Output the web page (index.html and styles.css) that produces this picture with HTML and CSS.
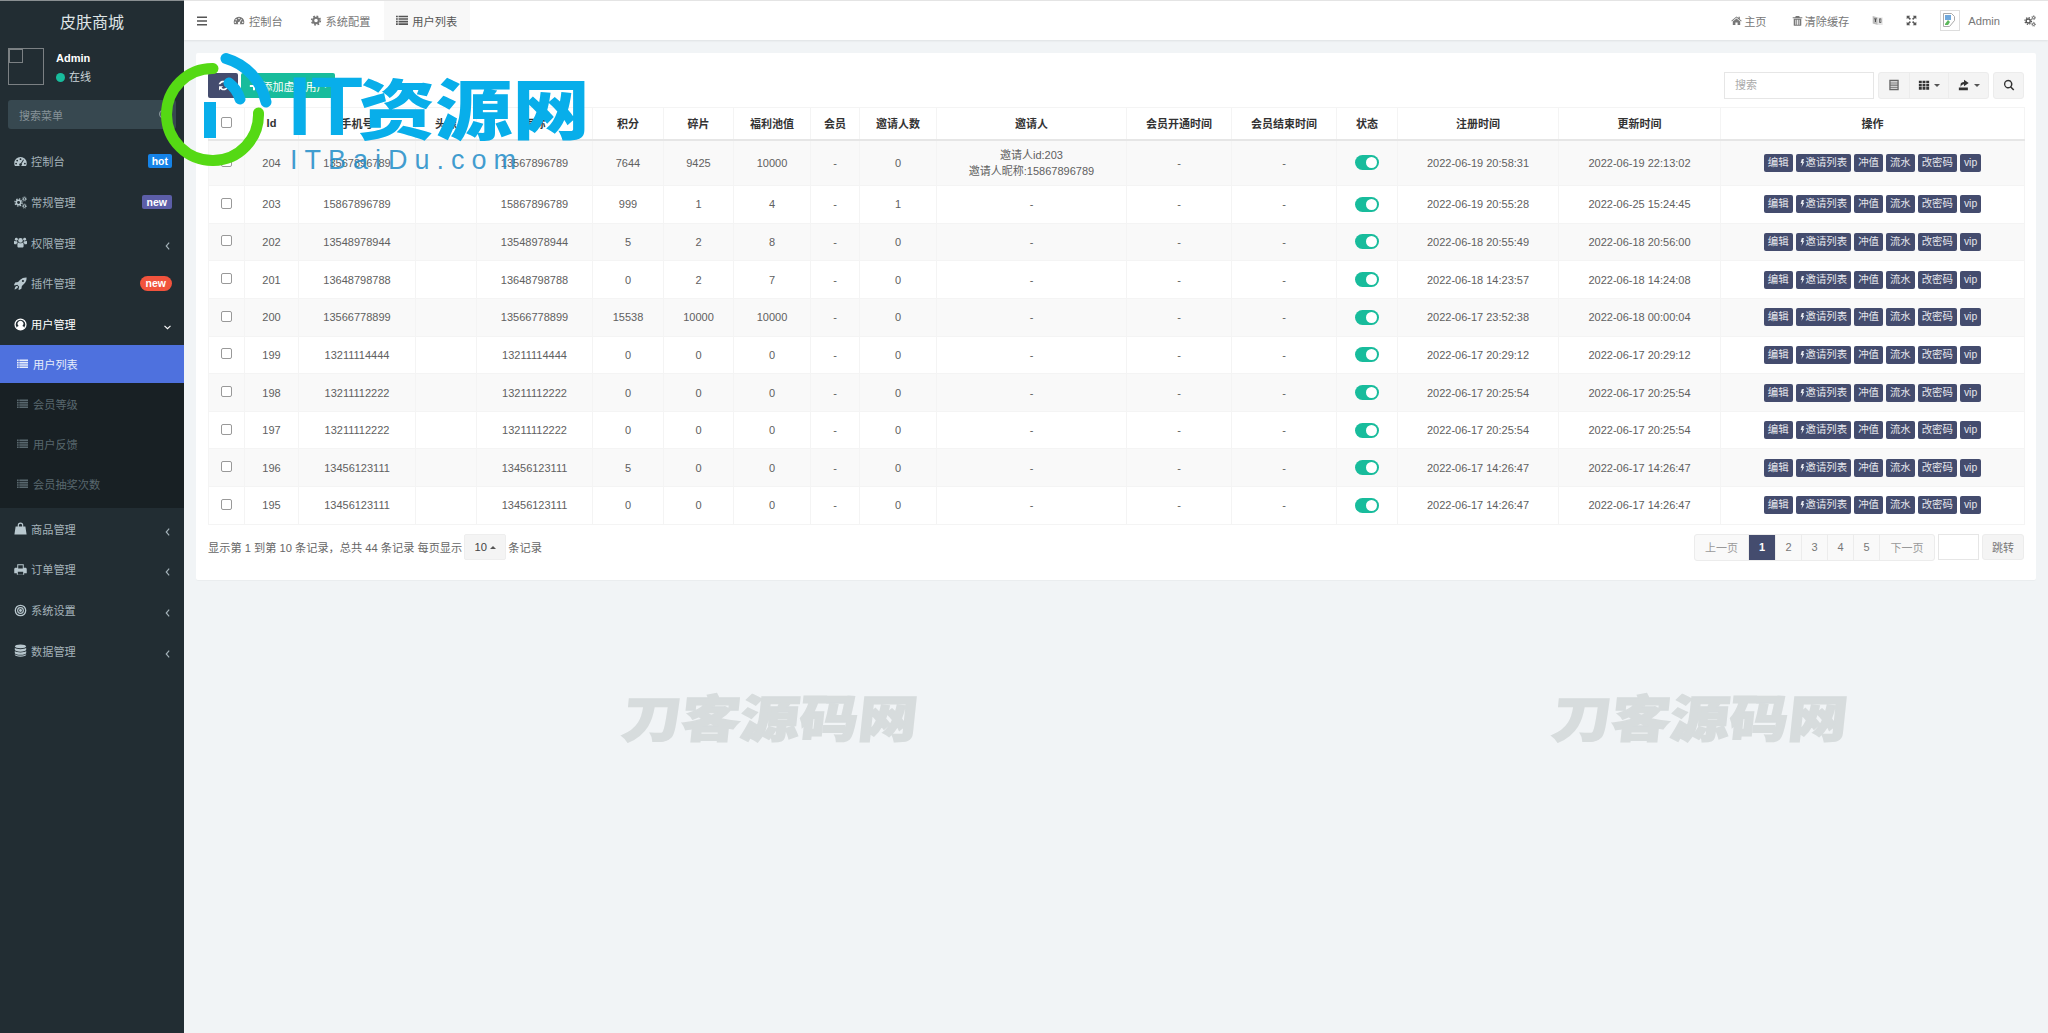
FILE: index.html
```html
<!DOCTYPE html>
<html lang="zh-CN">
<head>
<meta charset="utf-8">
<title>皮肤商城</title>
<link rel="stylesheet" href="styles.css">
</head>
<body>
<svg class="defs" width="0" height="0" aria-hidden="true">
  <symbol id="i-dash" viewBox="0 0 16 16"><path fill-rule="evenodd" d="M8 2.5A7.7 7.7 0 0 0 .3 10.2c0 1.3.3 2.4.9 3.3h13.6c.6-.9.9-2 .9-3.3A7.7 7.7 0 0 0 8 2.5zM8 4a1.1 1.1 0 1 1 0 2.2A1.1 1.1 0 0 1 8 4zM3.9 5.8a1.1 1.1 0 1 1 0 2.2 1.1 1.1 0 0 1 0-2.2zM2.600 9.500a1.100 1.100 0 1 1 0 2.200 1.100 1.100 0 0 1 0-2.200zM13.400 9.500a1.100 1.100 0 1 1 0 2.200 1.100 1.100 0 0 1 0-2.200zM11.300 5.500l.9.600-2.800 4.600a1.700 1.700 0 1 1-1-.600z"/></symbol>
  <symbol id="i-cogs" viewBox="0 0 16 16"><g fill="none" stroke="currentColor"><circle cx="5.600" cy="8" r="2.700" stroke-width="1.800"/><circle cx="5.600" cy="8" r="4.400" stroke-width="1.600" stroke-dasharray="1.800 1.650"/><circle cx="12.800" cy="3.600" r="1.500" stroke-width="1.200"/><circle cx="12.800" cy="3.600" r="2.600" stroke-width="1" stroke-dasharray="1 1.040"/><circle cx="12.800" cy="12.400" r="1.500" stroke-width="1.200"/><circle cx="12.800" cy="12.400" r="2.600" stroke-width="1" stroke-dasharray="1 1.040"/></g></symbol>
  <symbol id="i-users" viewBox="0 0 16 16"><circle cx="8" cy="5.400" r="2.800"/><circle cx="2.900" cy="4" r="1.800"/><circle cx="13.100" cy="4" r="1.800"/><path d="M4.200 9.700c0-1 .9-1.500 1.700-1.500.6.500 1.300.8 2.100.8s1.500-.3 2.100-.8c.8 0 1.700.5 1.700 1.500v2.800c0 1-.7 1.500-1.500 1.500H5.700c-.8 0-1.500-.5-1.500-1.500zM0 6.800c0-.5.5-.9 1-.9.500.5 1.200.7 1.900.7.300 0 .6 0 .9-.1.200.6.500 1.100.9 1.500-.8.300-1.500 1-1.600 2H.9c-.5 0-.9-.3-.9-.8zM16 6.800c0-.5-.5-.9-1-.9-.5.500-1.200.7-1.900.7-.3 0-.6 0-.9-.1-.2.600-.5 1.100-.9 1.500.8.300 1.500 1 1.600 2h2.200c.5 0 .9-.3.900-.8z"/></symbol>
  <symbol id="i-rocket" viewBox="0 0 16 16"><path fill-rule="evenodd" d="M15.500.5c.1 3.300-.9 5.900-3 7.900L9.700 11l-.6 3.600-3 1.400-.6-.8.900-3.300-2.300-2.300-3.300.9-.8-.6L1.400 6.900 5 6.300l2.600-2.800C9.600 1.400 12.200.4 15.500.5zM11 3.700a1.300 1.300 0 1 0 0 2.600 1.300 1.300 0 0 0 0-2.600zM2.500 11.500c1-.6 1.700-.3 2 0s.5 1 0 1.800c-.7 1-2.500 1.700-3.800 2 .3-1.300 .8-3.100 1.800-3.800z"/></symbol>
  <symbol id="i-user" viewBox="0 0 16 16"><path fill-rule="evenodd" d="M8 .5a7.500 7.500 0 1 1 0 15 7.500 7.500 0 0 1 0-15zm0 1.500a6 6 0 0 0-4.500 9.900c.3-1.200 1.100-2 2.200-2.200a3.500 3.500 0 1 1 4.600 0c1.100.2 1.900 1 2.200 2.200A6 6 0 0 0 8 2z"/></symbol>
  <symbol id="i-list" viewBox="0 0 16 14"><path d="M0 .5h2.400v2.200H0zM3.400.5H16v2.200H3.400zM0 3.900h2.400v2.200H0zM3.400 3.900H16v2.200H3.400zM0 7.300h2.400v2.200H0zM3.400 7.300H16v2.200H3.400zM0 10.700h2.400v2.200H0zM3.400 10.700H16v2.200H3.400z"/></symbol>
  <symbol id="i-bag" viewBox="0 0 16 16"><path fill-rule="evenodd" d="M2 5.500h2.600V4a3.400 3.400 0 0 1 6.800 0v1.500H14l1.500 9.800H.5zM6 5.500h4V4a2 2 0 0 0-4 0z"/></symbol>
  <symbol id="i-print" viewBox="0 0 16 16"><path fill-rule="evenodd" d="M4 1.500h8v4.400h2c1 0 1.700.7 1.700 1.600v5h-3.200v2H3.500v-2H.3v-5c0-.9.7-1.600 1.700-1.600h2zM5.200 2.700v4h5.600v-4zM4.700 10.700v3.400h6.600v-3.400z"/></symbol>
  <symbol id="i-target" viewBox="0 0 16 16"><path fill-rule="evenodd" d="M8 .8a7.200 7.200 0 1 1 0 14.400A7.200 7.200 0 0 1 8 .8zM8 2.400a5.600 5.600 0 1 0 0 11.200A5.600 5.600 0 0 0 8 2.400zM8 3.800a4.200 4.200 0 1 1 0 8.400 4.200 4.200 0 0 1 0-8.400zM8 5.200a2.800 2.800 0 1 0 0 5.600 2.800 2.800 0 0 0 0-5.600z"/><circle cx="8" cy="8" r="1.700"/></symbol>
  <symbol id="i-db" viewBox="0 0 16 16"><path d="M8 .5c3.900 0 7 1 7 2.400S11.900 5.300 8 5.300 1 4.300 1 2.900 4.100.5 8 .5zM1 4.700c1.300 1.200 4 1.700 7 1.700s5.700-.5 7-1.700v2.400c0 1.300-3.100 2.300-7 2.300s-7-1-7-2.300zM1 8.700c1.300 1.200 4 1.700 7 1.700s5.700-.5 7-1.700v2.300c0 1.300-3.100 2.300-7 2.300S1 12.300 1 11zM1 12.500c1.300 1.100 4 1.700 7 1.700s5.700-.6 7-1.700v.8c0 1.400-3.100 2.300-7 2.300s-7-.9-7-2.300z"/></symbol>
  <symbol id="i-left" viewBox="0 0 8 12"><path d="M6 2 2.500 6 6 10" fill="none" stroke="currentColor" stroke-width="1.400"/></symbol>
  <symbol id="i-down" viewBox="0 0 12 8"><path d="M2 1.800 6 5.600l4-3.800" fill="none" stroke="currentColor" stroke-width="1.500"/></symbol>
  <symbol id="i-bars" viewBox="0 0 12 12"><path d="M1 1.500h10v1.400H1zM1 5.300h10v1.400H1zM1 9.100h10v1.400H1z"/></symbol>
  <symbol id="i-cog" viewBox="0 0 16 16"><circle cx="8" cy="8" r="4.100" fill="none" stroke="currentColor" stroke-width="3"/><circle cx="8" cy="8" r="6.300" fill="none" stroke="currentColor" stroke-width="2.400" stroke-dasharray="2.500 2.450"/></symbol>
  <symbol id="i-home" viewBox="0 0 16 16"><path d="M8 2 .5 8.300l.8 1L8 3.800l6.700 5.500.8-1L12.800 6V2.600h-1.900v1.800zM8 5 2.600 9.500v5h3.800v-3.600h3.200v3.600h3.800v-5z"/></symbol>
  <symbol id="i-trash" viewBox="0 0 16 16"><path fill-rule="evenodd" d="M5.500 1.500h5l.8 1.600H15v1.500H1V3.100h3.700zM2.500 5.500h11v9.300c0 .5-.4.9-.9.900H3.400c-.5 0-.9-.4-.9-.9zM5 7v7h1.200V7zM7.400 7v7h1.200V7zM9.800 7v7H11V7z"/></symbol>
  <symbol id="i-lang" viewBox="0 0 16 16"><path fill="#bbb" d="M1 1.500 8.500 3.500v11L1 12.500z"/><path fill="#e4e4e4" d="M8 3.500h7.500v11H8z"/><path fill="#444" d="M3 5h4v1.300H5.700v4H4.300v-4H3zM10.500 5.200h3v6h-3zM11.500 6.200v4h1v-4z"/></symbol>
  <symbol id="i-expand" viewBox="0 0 16 16"><path d="M1 1h5.200L4.400 2.800l2.800 2.800-1.600 1.600-2.800-2.800L1 6.200zM15 1v5.200l-1.800-1.800-2.800 2.800-1.600-1.600 2.800-2.800L9.800 1zM1 15V9.800l1.800 1.800 2.800-2.800 1.600 1.600-2.800 2.800L6.200 15zM15 15H9.800l1.800-1.800-2.800-2.800 1.600-1.600 2.800 2.800L15 9.800z"/></symbol>
  <symbol id="i-refresh" viewBox="0 0 16 16"><path d="M13.500 2v5h-5l1.900-1.900A3.800 3.800 0 0 0 4.200 6.600H2a6 6 0 0 1 9.900-3zM2.500 14V9h5l-1.900 1.900a3.800 3.800 0 0 0 6.200-1.500H14a6 6 0 0 1-9.900 3z"/></symbol>
  <symbol id="i-plus" viewBox="0 0 12 12"><path d="M4.800 1h2.400v3.800H11v2.400H7.200V11H4.800V7.200H1V4.800h3.800z"/></symbol>
  <symbol id="i-bolt" viewBox="0 0 8 14"><path d="M3 .5h3.500L4.700 5H7L2.300 13.500 3.500 7H1z"/></symbol>
  <symbol id="i-card" viewBox="0 0 14 14"><path fill-rule="evenodd" d="M1.500 1h11v12h-11zM3 2.500V4h8V2.500zM3 5.300v1.200h8V5.300zM3 7.800V9h8V7.800zM3 10.200v1.300h8v-1.300z"/></symbol>
  <symbol id="i-grid" viewBox="0 0 14 14"><path d="M1 2h3.400v3H1zM5.300 2h3.400v3H5.300zM9.600 2H13v3H9.600zM1 5.700h3.400v3H1zM5.300 5.700h3.400v3H5.300zM9.600 5.700H13v3H9.600zM1 9.400h3.400v3H1zM5.300 9.400h3.400v3H5.300zM9.600 9.400H13v3H9.600z"/></symbol>
  <symbol id="i-export" viewBox="0 0 14 14"><path d="M1 10h10.500v3H1zM3 9.200V6.500c0-1.800 1.600-3 4-3V1l5.500 3.800L7 8.500V6c-1.800 0-3 .9-4 3.200z"/></symbol>
  <symbol id="i-search" viewBox="0 0 14 14"><path fill-rule="evenodd" d="M6 1a5 5 0 0 1 4 8l3.200 3.200-1.300 1.300L8.700 10.300A5 5 0 1 1 6 1zM6 2.700a3.300 3.300 0 1 0 0 6.600 3.300 3.300 0 0 0 0-6.600z"/></symbol>
</svg>

<aside class="sidebar">
  <div class="brand">皮肤商城</div>
  <div class="user-panel">
    <div class="avatar"><span class="avatar-inner"></span></div>
    <div class="user-info">
      <div class="user-name">Admin</div>
      <div class="user-status"><span class="dot"></span>在线</div>
    </div>
  </div>
  <div class="side-search"><span>搜索菜单</span><svg class="side-search-icon"><use href="#i-search"/></svg></div>
  <ul class="menu">
    <li class="menu-item"><svg class="mi"><use href="#i-dash"/></svg><span class="ml">控制台</span><span class="badge badge-hot">hot</span></li>
    <li class="menu-item"><svg class="mi"><use href="#i-cogs"/></svg><span class="ml">常规管理</span><span class="badge badge-new">new</span></li>
    <li class="menu-item"><svg class="mi"><use href="#i-users"/></svg><span class="ml">权限管理</span><svg class="chev"><use href="#i-left"/></svg></li>
    <li class="menu-item"><svg class="mi"><use href="#i-rocket"/></svg><span class="ml">插件管理</span><span class="badge badge-red">new</span></li>
    <li class="menu-item is-open"><svg class="mi"><use href="#i-user"/></svg><span class="ml">用户管理</span><svg class="chev chev-down"><use href="#i-down"/></svg></li>
    <li class="submenu">
      <div class="sub-item is-active"><svg class="si"><use href="#i-list"/></svg>用户列表</div>
      <div class="sub-item"><svg class="si"><use href="#i-list"/></svg>会员等级</div>
      <div class="sub-item"><svg class="si"><use href="#i-list"/></svg>用户反馈</div>
      <div class="sub-item"><svg class="si"><use href="#i-list"/></svg>会员抽奖次数</div>
    </li>
    <li class="menu-item"><svg class="mi"><use href="#i-bag"/></svg><span class="ml">商品管理</span><svg class="chev"><use href="#i-left"/></svg></li>
    <li class="menu-item"><svg class="mi"><use href="#i-print"/></svg><span class="ml">订单管理</span><svg class="chev"><use href="#i-left"/></svg></li>
    <li class="menu-item"><svg class="mi"><use href="#i-target"/></svg><span class="ml">系统设置</span><svg class="chev"><use href="#i-left"/></svg></li>
    <li class="menu-item"><svg class="mi"><use href="#i-db"/></svg><span class="ml">数据管理</span><svg class="chev"><use href="#i-left"/></svg></li>
  </ul>
</aside>

<div class="main">
  <header class="topbar">
    <svg class="bars"><use href="#i-bars"/></svg>
    <nav class="tabs">
      <div class="tab"><svg class="ti"><use href="#i-dash"/></svg>控制台</div>
      <div class="tab"><svg class="ti"><use href="#i-cog"/></svg>系统配置</div>
      <div class="tab tab-active"><svg class="ti"><use href="#i-list"/></svg>用户列表</div>
    </nav>
    <div class="top-right">
      <div class="top-link"><svg class="ti-s"><use href="#i-home"/></svg>主页</div>
      <div class="top-link"><svg class="ti-s"><use href="#i-trash"/></svg>清除缓存</div>
      <svg class="top-ic"><use href="#i-lang"/></svg>
      <svg class="top-ic"><use href="#i-expand"/></svg>
      <div class="top-user">
        <div class="broken"><svg viewBox="0 0 16 16"><path fill="#fff" stroke="#aaa" stroke-width="1" d="M1.500 1.500h8l3 3v4l-5 6h-6z"/><path fill="#6fa8dc" d="M3 3h6v5H3z"/><path fill="#5cb85c" d="M3 12l3-4 2 2-2 3H3z"/></svg></div>
        <span>Admin</span>
      </div>
      <svg class="top-ic top-cogs"><use href="#i-cogs"/></svg>
    </div>
  </header>

  <main class="content">
    <section class="panel">
      <div class="toolbar">
        <div class="tool-left">
          <button class="btn btn-dark"><svg class="bi"><use href="#i-refresh"/></svg></button>
          <button class="btn btn-green"><svg class="bi-s"><use href="#i-plus"/></svg>添加虚拟用户</button>
        </div>
        <div class="tool-right">
          <div class="search-input">搜索</div>
          <div class="btn-group">
            <span class="gbtn gbtn-a"><svg class="gi"><use href="#i-card"/></svg></span>
            <span class="gbtn gbtn-b"><svg class="gi"><use href="#i-grid"/></svg><i class="caret"></i></span>
            <span class="gbtn gbtn-c"><svg class="gi"><use href="#i-export"/></svg><i class="caret"></i></span>
          </div>
          <span class="gbtn gbtn-search"><svg class="gi"><use href="#i-search"/></svg></span>
        </div>
      </div>

      <table class="grid">
        <thead>
          <tr><th><span class="cb"></span></th><th>Id</th><th>手机号</th><th>头像</th><th>昵称</th><th>积分</th><th>碎片</th><th>福利池值</th><th>会员</th><th>邀请人数</th><th>邀请人</th><th>会员开通时间</th><th>会员结束时间</th><th>状态</th><th>注册时间</th><th>更新时间</th><th>操作</th></tr>
        </thead>
        <tbody>
          <tr class="tall"><td><span class="cb"></span></td><td>204</td><td>13567896789</td><td></td><td>13567896789</td><td>7644</td><td>9425</td><td>10000</td><td>-</td><td>0</td><td>邀请人id:203<br>邀请人昵称:15867896789</td><td>-</td><td>-</td><td><span class="switch"></span></td><td>2022-06-19 20:58:31</td><td>2022-06-19 22:13:02</td><td><div class="acts"><span class="act">编辑</span><span class="act"><svg class="bolt"><use href="#i-bolt"/></svg>邀请列表</span><span class="act">冲值</span><span class="act">流水</span><span class="act">改密码</span><span class="act">vip</span></div></td></tr>
          <tr><td><span class="cb"></span></td><td>203</td><td>15867896789</td><td></td><td>15867896789</td><td>999</td><td>1</td><td>4</td><td>-</td><td>1</td><td>-</td><td>-</td><td>-</td><td><span class="switch"></span></td><td>2022-06-19 20:55:28</td><td>2022-06-25 15:24:45</td><td><div class="acts"><span class="act">编辑</span><span class="act"><svg class="bolt"><use href="#i-bolt"/></svg>邀请列表</span><span class="act">冲值</span><span class="act">流水</span><span class="act">改密码</span><span class="act">vip</span></div></td></tr>
          <tr><td><span class="cb"></span></td><td>202</td><td>13548978944</td><td></td><td>13548978944</td><td>5</td><td>2</td><td>8</td><td>-</td><td>0</td><td>-</td><td>-</td><td>-</td><td><span class="switch"></span></td><td>2022-06-18 20:55:49</td><td>2022-06-18 20:56:00</td><td><div class="acts"><span class="act">编辑</span><span class="act"><svg class="bolt"><use href="#i-bolt"/></svg>邀请列表</span><span class="act">冲值</span><span class="act">流水</span><span class="act">改密码</span><span class="act">vip</span></div></td></tr>
          <tr><td><span class="cb"></span></td><td>201</td><td>13648798788</td><td></td><td>13648798788</td><td>0</td><td>2</td><td>7</td><td>-</td><td>0</td><td>-</td><td>-</td><td>-</td><td><span class="switch"></span></td><td>2022-06-18 14:23:57</td><td>2022-06-18 14:24:08</td><td><div class="acts"><span class="act">编辑</span><span class="act"><svg class="bolt"><use href="#i-bolt"/></svg>邀请列表</span><span class="act">冲值</span><span class="act">流水</span><span class="act">改密码</span><span class="act">vip</span></div></td></tr>
          <tr><td><span class="cb"></span></td><td>200</td><td>13566778899</td><td></td><td>13566778899</td><td>15538</td><td>10000</td><td>10000</td><td>-</td><td>0</td><td>-</td><td>-</td><td>-</td><td><span class="switch"></span></td><td>2022-06-17 23:52:38</td><td>2022-06-18 00:00:04</td><td><div class="acts"><span class="act">编辑</span><span class="act"><svg class="bolt"><use href="#i-bolt"/></svg>邀请列表</span><span class="act">冲值</span><span class="act">流水</span><span class="act">改密码</span><span class="act">vip</span></div></td></tr>
          <tr><td><span class="cb"></span></td><td>199</td><td>13211114444</td><td></td><td>13211114444</td><td>0</td><td>0</td><td>0</td><td>-</td><td>0</td><td>-</td><td>-</td><td>-</td><td><span class="switch"></span></td><td>2022-06-17 20:29:12</td><td>2022-06-17 20:29:12</td><td><div class="acts"><span class="act">编辑</span><span class="act"><svg class="bolt"><use href="#i-bolt"/></svg>邀请列表</span><span class="act">冲值</span><span class="act">流水</span><span class="act">改密码</span><span class="act">vip</span></div></td></tr>
          <tr><td><span class="cb"></span></td><td>198</td><td>13211112222</td><td></td><td>13211112222</td><td>0</td><td>0</td><td>0</td><td>-</td><td>0</td><td>-</td><td>-</td><td>-</td><td><span class="switch"></span></td><td>2022-06-17 20:25:54</td><td>2022-06-17 20:25:54</td><td><div class="acts"><span class="act">编辑</span><span class="act"><svg class="bolt"><use href="#i-bolt"/></svg>邀请列表</span><span class="act">冲值</span><span class="act">流水</span><span class="act">改密码</span><span class="act">vip</span></div></td></tr>
          <tr><td><span class="cb"></span></td><td>197</td><td>13211112222</td><td></td><td>13211112222</td><td>0</td><td>0</td><td>0</td><td>-</td><td>0</td><td>-</td><td>-</td><td>-</td><td><span class="switch"></span></td><td>2022-06-17 20:25:54</td><td>2022-06-17 20:25:54</td><td><div class="acts"><span class="act">编辑</span><span class="act"><svg class="bolt"><use href="#i-bolt"/></svg>邀请列表</span><span class="act">冲值</span><span class="act">流水</span><span class="act">改密码</span><span class="act">vip</span></div></td></tr>
          <tr><td><span class="cb"></span></td><td>196</td><td>13456123111</td><td></td><td>13456123111</td><td>5</td><td>0</td><td>0</td><td>-</td><td>0</td><td>-</td><td>-</td><td>-</td><td><span class="switch"></span></td><td>2022-06-17 14:26:47</td><td>2022-06-17 14:26:47</td><td><div class="acts"><span class="act">编辑</span><span class="act"><svg class="bolt"><use href="#i-bolt"/></svg>邀请列表</span><span class="act">冲值</span><span class="act">流水</span><span class="act">改密码</span><span class="act">vip</span></div></td></tr>
          <tr><td><span class="cb"></span></td><td>195</td><td>13456123111</td><td></td><td>13456123111</td><td>0</td><td>0</td><td>0</td><td>-</td><td>0</td><td>-</td><td>-</td><td>-</td><td><span class="switch"></span></td><td>2022-06-17 14:26:47</td><td>2022-06-17 14:26:47</td><td><div class="acts"><span class="act">编辑</span><span class="act"><svg class="bolt"><use href="#i-bolt"/></svg>邀请列表</span><span class="act">冲值</span><span class="act">流水</span><span class="act">改密码</span><span class="act">vip</span></div></td></tr>
        </tbody>
      </table>

      <div class="foot">
        <div class="foot-info">显示第 1 到第 10 条记录，总共 44 条记录 每页显示<span class="size-btn">10<i class="caret-up"></i></span>条记录</div>
        <div class="foot-pager">
          <div class="pager">
            <span class="pg pg-text">上一页</span><span class="pg pg-on">1</span><span class="pg">2</span><span class="pg">3</span><span class="pg">4</span><span class="pg">5</span><span class="pg pg-text">下一页</span>
          </div>
          <span class="jump-input"></span>
          <span class="jump-btn">跳转</span>
        </div>
      </div>
    </section>
  </main>
</div>

<div class="watermark wm-1">刀客源码网</div>
<div class="watermark wm-2">刀客源码网</div>

<div class="logo">
  <svg class="logo-mark" viewBox="0 0 125 110" width="125" height="110">
    <rect x="44" y="41" width="12" height="36" fill="#08aeea"/>
    <path d="M53 7.500A46 46 0 1 0 98.500 52" fill="none" stroke="#55d914" stroke-width="11" stroke-linecap="round"/>
    <path d="M66 -2.500A57 57 0 0 1 106 41" fill="none" stroke="#08aeea" stroke-width="11" stroke-linecap="round"/>
    <path d="M69 22A32 32 0 0 1 80 38" fill="none" stroke="#08aeea" stroke-width="11" stroke-linecap="round"/>
  </svg>
  <span class="logo-it">IT</span>
  <span class="logo-cn">资源网</span>
  <span class="logo-en">ITBaiDu.com</span>
</div>
</body>
</html>
```

FILE: styles.css
```css
* { box-sizing: border-box; }
html, body { margin: 0; padding: 0; }
body {
  display: flex;
  min-height: 1033px;
  background: #f1f4f6;
  font-family: "Liberation Sans", "Noto Sans CJK SC", sans-serif;
  font-size: 11px;
  color: #606060;
  overflow: hidden;
  position: relative;
}
.defs { position: absolute; }
svg { fill: currentColor; display: block; }
ul { list-style: none; margin: 0; padding: 0; }

/* sidebar */
.sidebar {
  width: 184px;
  flex: none;
  background: #222d33;
  border-top: 1px solid #8a8f92;
  color: #b8c7ce;
}
.brand {
  height: 39px;
  display: flex;
  align-items: center;
  justify-content: center;
  font-size: 16px;
  color: #dfe4e6;
}
.user-panel { display: flex; padding: 8px 8px 0; gap: 12px; height: 45px; }
.avatar { width: 36px; height: 37px; border: 1px solid #7b8083; flex: none; position: relative; }
.avatar-inner { position: absolute; left: 0; top: 0; width: 14px; height: 14px; border: 1px solid #7b8083; }
.user-name { font-weight: 700; color: #fff; font-size: 11px; line-height: 13px; margin-top: 4px; }
.user-status { display: flex; align-items: center; gap: 4px; color: #ccd6da; line-height: 13px; margin-top: 5.500px; }
.dot { width: 9px; height: 9px; border-radius: 50%; background: #18bc9c; }
.side-search {
  margin: 15px 8px 0;
  height: 29px;
  background: #374850;
  border-radius: 3px;
  display: flex;
  align-items: center;
  justify-content: space-between;
  padding: 0 6px 0 11px;
  color: #869298;
}
.side-search-icon { width: 12px; height: 12px; }
.menu { margin-top: 12px; font-size: 11.2px; }
.menu-item {
  height: 40.7px;
  padding: 0 12px 0 14px;
  display: flex;
  align-items: center;
  color: #a4b2b9;
}
.menu-item.is-open { color: #fff; }
.mi { width: 13px; height: 13px; flex: none; color: #b8c7ce; }
.is-open .mi { color: #fff; }
.ml { margin-left: 4px; flex: 1; }
.chev { width: 7px; height: 10px; margin-top: 6px; margin-right: 1px; color: #a4b2b9; }
.chev-down { width: 9px; height: 7px; color: #fff; margin-right: 0; }
.badge { color: #fff; font-weight: 700; font-size: 10.5px; line-height: 14px; height: 14px; padding: 0 4px; border-radius: 2px; }
.badge-hot { background: #1583e8; }
.badge-new { background: #5c5ea8; padding: 0 5px; }
.badge-red { background: #f1533d; border-radius: 8px; height: 15px; padding: 0 6px; }
.submenu { background: #182024; height: 163px; }
.sub-item {
  height: 40px;
  padding-left: 17px;
  display: flex;
  align-items: center;
  color: #59686f;
}
.sub-item.is-active { background: #4e71de; color: #e8eefb; height: 38px; margin: 1px 0; }
.si { width: 11px; height: 10px; margin-right: 5px; flex: none; }

/* main */
.main { flex: 1; min-width: 0; }
.topbar {
  height: 40px;
  background: #fff;
  display: flex;
  align-items: stretch;
  padding-left: 12px;
  border-top: 1px solid #e4e4e4;
  box-shadow: 0 1px 2px rgba(0, 0, 0, .08);
  color: #777;
  position: relative;
}
.bars { width: 12px; height: 12px; align-self: center; color: #555; }
.tabs { display: flex; margin-left: 13px; }
.tab { display: flex; align-items: center; padding: 0 15px 0 12px; font-size: 11.2px; }
.tab:nth-child(2) { padding-right: 14px; }
.tab-active { background: #f8f8f8; color: #555; padding: 0 13px 0 12px; }
.ti { width: 12px; height: 11px; margin-right: 4px; }
.top-right { margin-left: auto; display: flex; align-items: center; padding-right: 12px; }
.top-link { display: flex; align-items: center; gap: 2px; margin-right: 25px; font-size: 11.2px; }
.top-link + .top-link { margin-right: 23px; }
.ti-s { width: 11px; height: 11px; }
.top-ic { width: 11px; height: 11px; margin-right: 23px; color: #555; }
.top-user { display: flex; align-items: center; gap: 8px; margin-right: 24px; font-size: 11.2px; }
.broken { width: 20px; height: 21px; border: 1px solid #ddd; padding: 1px; }
.top-cogs { margin-right: 0; width: 12px; height: 12px; }

.content { padding: 13px 12px; }
.panel { background: #fff; padding: 20px 12px 19px; border-radius: 2px; box-shadow: 0 1px 1px rgba(0, 0, 0, .03); }
.toolbar { display: flex; justify-content: space-between; height: 34px; }
.tool-left { display: flex; gap: 3px; }
.btn {
  height: 25px;
  border: 0;
  border-radius: 2px;
  color: #fff;
  font: inherit;
  display: flex;
  align-items: center;
  justify-content: center;
}
.btn-dark { width: 30px; background: #444c6e; }
.btn-green { width: 94px; background: #18bc9c; gap: 3px; }
.bi { width: 13px; height: 13px; }
.bi-s { width: 10px; height: 10px; }
.tool-right { display: flex; align-items: flex-start; margin-top: -1px; }
.search-input { width: 150px; height: 27px; border: 1px solid #e6e6e6; color: #aaa; padding-left: 10px; line-height: 25px; }
.btn-group { display: flex; margin-left: 4px; height: 26.500px; border: 1px solid #ececec; border-radius: 3px; background: #f4f4f4; }
.gbtn { display: flex; align-items: center; justify-content: center; gap: 4px; color: #333; height: 100%; }
.gbtn-a { width: 31px; border-right: 1px solid #ececec; color: #666; }
.gbtn-b { width: 39px; border-right: 1px solid #ececec; }
.gbtn-c { width: 39px; }
.gbtn-search { width: 31px; height: 26.500px; margin-left: 4px; border: 1px solid #ececec; border-radius: 3px; background: #f4f4f4; }
.gi { width: 12px; height: 12px; }
.caret { width: 0; height: 0; border-left: 3px solid transparent; border-right: 3px solid transparent; border-top: 3px solid #555; }
.caret-up { width: 0; height: 0; border-left: 3px solid transparent; border-right: 3px solid transparent; border-bottom: 3px solid #555; display: inline-block; margin-left: 3px; vertical-align: 1px; }

/* table */
.grid { width: 1816px; table-layout: fixed; border-collapse: collapse; border: 1px solid #f2f2f2; }
.grid th, .grid td { border: 1px solid #f4f4f4; text-align: center; padding: 0; vertical-align: middle; }
.grid th { height: 32px; font-weight: 700; color: #333; border-bottom: 2px solid #e6e6e6; font-size: 11px; }
.grid td { height: 37.650px; line-height: 16px; }
.grid tr.tall td { height: 46px; }
.grid tbody tr:nth-child(odd) { background: #f9f9f9; }
.grid th:nth-child(1) { width: 36px; }
.grid th:nth-child(2) { width: 54px; }
.grid th:nth-child(3) { width: 117px; }
.grid th:nth-child(4) { width: 61px; }
.grid th:nth-child(5) { width: 116px; }
.grid th:nth-child(6) { width: 71px; }
.grid th:nth-child(7) { width: 70px; }
.grid th:nth-child(8) { width: 77px; }
.grid th:nth-child(9) { width: 49px; }
.grid th:nth-child(10) { width: 77px; }
.grid th:nth-child(11) { width: 190px; }
.grid th:nth-child(12) { width: 105px; }
.grid th:nth-child(13) { width: 105px; }
.grid th:nth-child(14) { width: 61px; }
.grid th:nth-child(15) { width: 161px; }
.grid th:nth-child(16) { width: 162px; }
.grid th:nth-child(17) { width: 304px; }
.cb { display: block; width: 11px; height: 11px; margin: -2px auto 0; border: 1px solid #999; border-radius: 2px; background: #fff; }
.switch { display: block; width: 24px; height: 15px; margin: 0 auto; border-radius: 8px; background: #18bc9c; position: relative; }
.switch::after { content: ""; position: absolute; right: 2px; top: 2px; width: 11px; height: 11px; border-radius: 50%; background: #fff; }
.acts { display: flex; justify-content: center; gap: 3px; }
.act {
  height: 18px;
  padding: 0 4px;
  display: flex;
  align-items: center;
  background: #444c6e;
  border-radius: 2px;
  color: #e4e6ec;
  font-size: 10.4px;
}
.bolt { width: 5px; height: 10px; margin-right: 1px; }

/* footer */
.foot { display: flex; justify-content: space-between; align-items: flex-start; margin-top: 9px; }
.foot-info { display: flex; align-items: center; height: 27px; color: #666; white-space: pre; font-size: 11.2px; }
.size-btn { display: flex; align-items: center; justify-content: center; width: 42px; height: 26px; margin: 0 2px; background: #f4f4f4; border: 1px solid #eee; border-radius: 2px; color: #444; }
.foot-pager { display: flex; align-items: flex-start; }
.pager { display: flex; height: 27px; border: 1px solid #ececec; border-radius: 3px; background: #f9f9f9; overflow: hidden; }
.pg { width: 26px; display: flex; align-items: center; justify-content: center; color: #777; border-right: 1px solid #ececec; font-size: 11px; }
.pg:last-child { border-right: 0; }
.pg-text { width: 54px; color: #999; }
.pg-on { background: #444c6e; color: #fff; font-weight: 700; width: 27px; }
.jump-input { width: 41px; height: 26px; margin-left: 3px; border: 1px solid #e6e6e6; background: #fff; }
.jump-btn { width: 42px; height: 26px; margin-left: 3px; border: 1px solid #ececec; border-radius: 3px; background: #f4f4f4; display: flex; align-items: center; justify-content: center; color: #777; }

/* overlays */
.watermark {
  position: absolute;
  top: 686px;
  font-family: "Noto Sans CJK SC", sans-serif;
  font-weight: 900;
  font-size: 50px;
  line-height: 58px;
  color: #d7dcdd;
  -webkit-text-stroke: 1.5px #d7dcdd;
  transform: skewX(-6deg) scaleX(1.18);
  transform-origin: left center;
  white-space: nowrap;
}
.wm-1 { left: 623px; }
.wm-2 { left: 1553px; }
.logo { position: absolute; left: 160px; top: 56px; width: 400px; height: 120px; z-index: 5; color: #08aeea; }
.logo-mark { position: absolute; left: 0; top: 4.500px; overflow: visible; }
.logo-it { position: absolute; left: 128px; top: 8px; font: 700 84px/84px "Liberation Sans", sans-serif; }
.logo-cn { position: absolute; left: 198px; top: 0; font: 900 66px/98px "Noto Sans CJK SC", sans-serif; transform: scaleX(1.17); transform-origin: left center; white-space: nowrap; }
.logo-en { position: absolute; left: 130px; top: 88px; font: 400 27px/32px "Liberation Sans", sans-serif; letter-spacing: 7px; color: rgba(30, 140, 200, .85); white-space: nowrap; }
```
